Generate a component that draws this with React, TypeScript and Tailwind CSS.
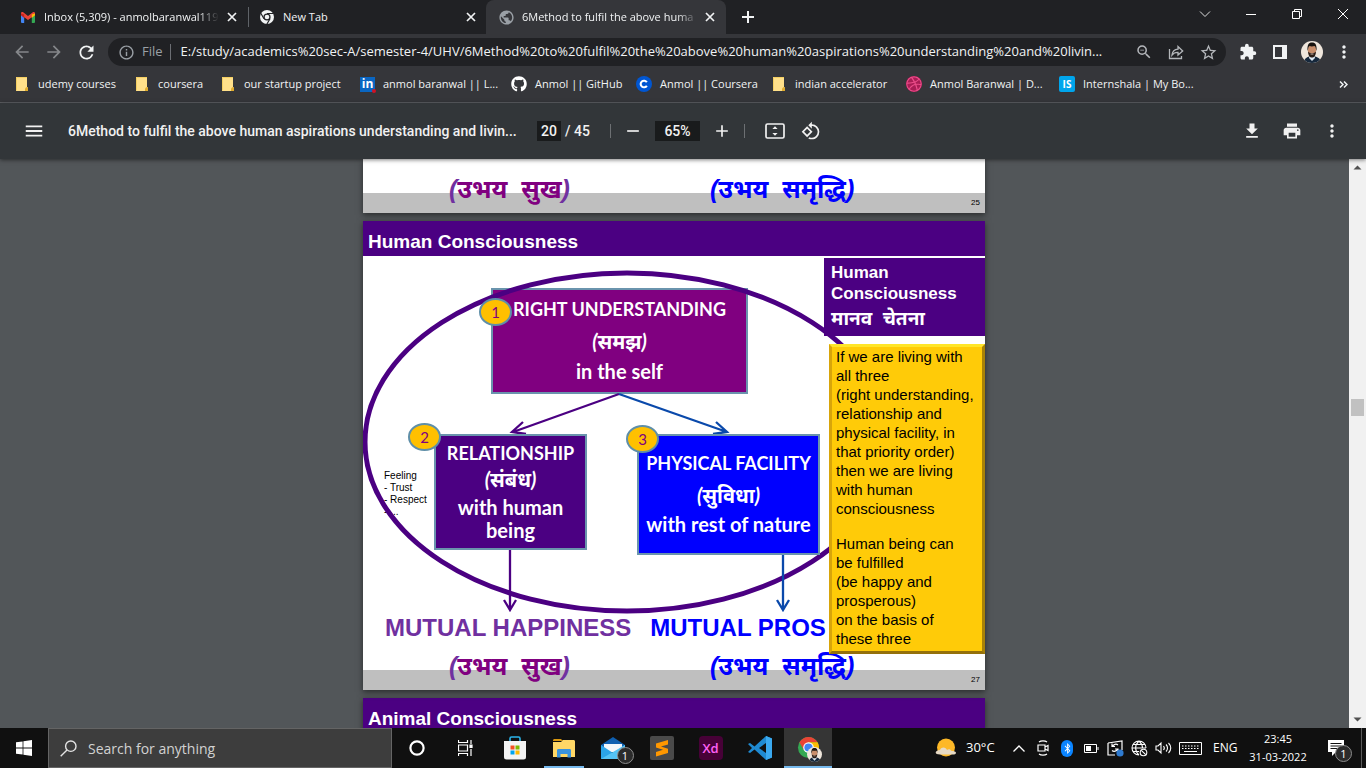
import type { ReactNode } from "react";
import {
  MdAdd,
  MdArrowBack,
  MdArrowForward,
  MdDownload,
  MdExtension,
  MdInfoOutline,
  MdMenu,
  MdMoreVert,
  MdPrint,
  MdPublic,
  MdRefresh,
  MdRemove,
  MdRotate90DegreesCcw,
  MdStarBorder,
  MdZoomOut,
} from "react-icons/md";
import { FaBluetoothB, FaDribbble, FaGithub } from "react-icons/fa";

const UI = "font-['Open_Sans','Noto_Sans',sans-serif]";

function IconButton({ label, className = "", children }: { label: string; className?: string; children: ReactNode }) {
  return (
    <button type="button" aria-label={label} className={`flex shrink-0 items-center justify-center ${className}`}>
      {children}
    </button>
  );
}

function CloseIcon() {
  return (
    <svg viewBox="0 0 10 10" className="size-[10px]" stroke="#f1f3f4" strokeWidth="1.7">
      <path d="M1 1l8 8M9 1l-8 8" />
    </svg>
  );
}

function GmailIcon() {
  return (
    <svg viewBox="0 0 14 11" className="w-[14px]">
      <path d="M0 1.5V10a1 1 0 0 0 1 1h2.2V4z" fill="#4285f4" />
      <path d="M14 1.5V10a1 1 0 0 1-1 1h-2.2V4z" fill="#34a853" />
      <path d="M0 1.500C0 .2 1.500-.3 2.500.5L7 4l4.500-3.500C12.500-.3 14 .2 14 1.500L13.900 3 7 8 .1 3z" fill="#ea4335" />
      <path d="M0 1.500l3.200 1V6L0 3.300z" fill="#c5221f" />
      <path d="M14 1.500l-3.200 1V6L14 3.300z" fill="#fbbc04" />
    </svg>
  );
}

function ChromeMonoIcon() {
  return (
    <svg viewBox="0 0 16 16" className="size-[16px]">
      <circle cx="8" cy="8" r="7" fill="#f1f3f4" />
      <path d="M8 4.500h6.500M5 9.700L1.800 4.200M11 9.800L7.800 15.200" stroke="#202124" strokeWidth="1.200" />
      <circle cx="8" cy="8" r="3.600" fill="#202124" />
      <circle cx="8" cy="8" r="2.300" fill="#f1f3f4" />
    </svg>
  );
}

function Avatar({ className }: { className: string }) {
  return (
    <svg viewBox="0 0 22 22" className={className}>
      <defs>
        <clipPath id="face">
          <circle cx="11" cy="11" r="11" />
        </clipPath>
      </defs>
      <g clipPath="url(#face)">
        <rect width="22" height="22" fill="#efe6dc" />
        <path d="M3 22c0-5 4-7 8-7s9 2 9 7z" fill="#16283c" />
        <path d="M8.500 14h5l.5 3-3 3-3-3z" fill="#dfe9f2" />
        <ellipse cx="11" cy="9" rx="4.200" ry="5.500" fill="#c98e6b" />
        <path d="M6.500 10c-.5-6 1-8.500 4.500-8.500S16 4 15.500 10c-.8-3-1-4.500-2-5-2 .6-4 .4-5 0-1.200.8-1.300 3-2 5z" fill="#17130f" />
        <path d="M7 10.500c.4 5 2 6 4 6s3.600-1 4-6c-1 1.500-2 1.500-4 1.500s-3 0-4-1.500z" fill="#2a1c15" />
        <path d="M9.500 13h3" stroke="#e8cfc0" strokeWidth=".9" />
      </g>
    </svg>
  );
}

function TabStrip() {
  return (
    <header className="flex h-[34px] shrink-0 items-center bg-[#202124] text-[12px] text-[#f1f3f4]">
      <div className="flex w-[248px] shrink-0 items-center pl-[21px]">
        <GmailIcon />
        <span className="ml-[9px] w-[175px] overflow-hidden whitespace-nowrap text-[11px] [mask-image:linear-gradient(to_right,#000_88%,transparent)]">
          Inbox (5,309) - anmolbaranwal119
        </span>
        <IconButton label="Close Inbox" className="ml-[8px]"><CloseIcon /></IconButton>
      </div>
      <div className="h-[20px] w-px bg-[#5f6368]" />
      <div className="flex w-[237px] shrink-0 items-center pl-[10px]">
        <ChromeMonoIcon />
        <span className="ml-[8px] flex-1 text-[11px]">New Tab</span>
        <IconButton label="Close New Tab" className="mr-[10px]"><CloseIcon /></IconButton>
      </div>
      <div className="flex h-full w-[240px] shrink-0 items-center rounded-t-[8px] bg-[#35363a] pl-[12px]">
        <MdPublic className="size-[17px] text-[#9aa0a6]" />
        <span className="ml-[7px] w-[176px] overflow-hidden whitespace-nowrap text-[11px] [mask-image:linear-gradient(to_right,#000_88%,transparent)]">
          6Method to fulfil the above huma
        </span>
        <IconButton label="Close current tab" className="ml-[7px]"><CloseIcon /></IconButton>
      </div>
      <IconButton label="New tab" className="ml-[15px]">
        <svg viewBox="0 0 14 14" className="size-[14px]" stroke="#f1f3f4" strokeWidth="2"><path d="M7 1v12M1 7h12" /></svg>
      </IconButton>
      <div className="ml-auto flex h-[28px] items-center self-start">
        <IconButton label="Search tabs" className="w-[46px]">
          <svg viewBox="0 0 12 8" className="w-[12px]" fill="none" stroke="#dcdcdc"><path d="M1 1.500l5 5 5-5" /></svg>
        </IconButton>
        <IconButton label="Minimise" className="w-[46px]">
          <svg viewBox="0 0 10 10" className="w-[10px]" stroke="#fff"><path d="M0 5.500h10" /></svg>
        </IconButton>
        <IconButton label="Restore" className="w-[46px]">
          <svg viewBox="0 0 10 10" className="w-[10px]" fill="none" stroke="#fff"><path d="M.5 2.500h7v7h-7zM2.500 2.500v-2h7v7h-2" /></svg>
        </IconButton>
        <IconButton label="Close window" className="w-[46px]">
          <svg viewBox="0 0 10 10" className="w-[10px]" stroke="#fff"><path d="M0 0l10 10M10 0L0 10" /></svg>
        </IconButton>
      </div>
    </header>
  );
}

function AddressBar() {
  return (
    <div className="flex h-[36px] shrink-0 items-center bg-[#35363a] px-[6px]">
      <IconButton label="Back" className="w-[32px]"><MdArrowBack className="size-[20px] text-[#85878a]" /></IconButton>
      <IconButton label="Forward" className="w-[32px]"><MdArrowForward className="size-[20px] text-[#85878a]" /></IconButton>
      <IconButton label="Reload" className="w-[32px]"><MdRefresh className="size-[21px] text-[#f1f3f4]" /></IconButton>
      <div className="ml-[6px] flex h-[28px] min-w-0 flex-1 items-center rounded-full bg-[#202124] pl-[10px]">
        <MdInfoOutline className="size-[17px] shrink-0 text-[#9aa0a6]" />
        <label htmlFor="url" className="ml-[7px] text-[13px] text-[#9aa0a6]">File</label>
        <span className="ml-[7px] h-[16px] w-px bg-[#6b6e73]" />
        <input
          id="url"
          className="ml-[10px] min-w-0 flex-1 bg-transparent text-[13px] text-[#f1f3f4] outline-none"
          defaultValue="E:/study/academics%20sec-A/semester-4/UHV/6Method%20to%20fulfil%20the%20above%20human%20aspirations%20understanding%20and%20livin..."
        />
        <IconButton label="Zoom out" className="w-[32px]"><MdZoomOut className="size-[18px] text-[#b4b7bb]" /></IconButton>
        <IconButton label="Share" className="w-[32px]">
          <svg viewBox="0 0 16 16" className="size-[16px]" fill="none" stroke="#b4b7bb" strokeWidth="1.300">
            <path d="M1.500 5v9.500h12V12M4 11c.5-4 3-5.600 6-5.800V2.500L14.700 7 10 11V8.300C7.500 8.200 5.500 9 4 11z" />
          </svg>
        </IconButton>
        <IconButton label="Bookmark" className="mr-[2px] w-[32px]"><MdStarBorder className="size-[19px] text-[#b4b7bb]" /></IconButton>
      </div>
      <IconButton label="Extensions" className="ml-[6px] w-[32px]"><MdExtension className="size-[18px] text-[#f1f3f4]" /></IconButton>
      <IconButton label="Side panel" className="w-[32px]">
        <svg viewBox="0 0 14 14" className="size-[14px]"><path d="M0 0h14v14H0zM2 2v10h7V2z" fill="#f1f3f4" fillRule="evenodd" /></svg>
      </IconButton>
      <IconButton label="Profile" className="w-[32px]"><Avatar className="size-[22px]" /></IconButton>
      <IconButton label="Menu" className="w-[32px]"><MdMoreVert className="size-[20px] text-[#f1f3f4]" /></IconButton>
    </div>
  );
}

function FolderIcon() {
  return (
    <svg viewBox="0 0 12 14" className="h-[14px] w-[12px]">
      <path d="M0 0h11v10l1 .8V14H0z" fill="#ffe08a" />
      <path d="M.5 13.500V.5H11" fill="none" stroke="#f4cf62" />
      <path d="M9 14v-2.500L10.500 10l1.500.8V14z" fill="#e0ac2f" />
    </svg>
  );
}

const bookmarks: { text: string; width: string; icon: ReactNode }[] = [
  { text: "udemy courses", width: "w-[120px] gap-[10px]", icon: <FolderIcon /> },
  { text: "coursera", width: "w-[86px] gap-[10px]", icon: <FolderIcon /> },
  { text: "our startup project", width: "w-[138px] gap-[10px]", icon: <FolderIcon /> },
  {
    text: "anmol baranwal || L...",
    width: "w-[151px] gap-[8px]",
    icon: (
      <span className="relative flex size-[15px] items-center justify-center bg-[#0a66c2] text-[12px] leading-none font-bold text-white">
        in
        <span className="absolute -right-px -bottom-px size-[4px] rounded-full bg-[#d11124]" />
      </span>
    ),
  },
  { text: "Anmol || GitHub", width: "w-[125px] gap-[8px]", icon: <FaGithub className="size-[16px] text-white" /> },
  {
    text: "Anmol || Coursera",
    width: "w-[137px] gap-[8px]",
    icon: (
      <svg viewBox="0 0 16 16" className="size-[16px]">
        <circle cx="8" cy="8" r="8" fill="#0056d2" />
        <path d="M10.800 6.300A3.300 3.300 0 1 0 10.800 9.700" fill="none" stroke="#fff" strokeWidth="2.100" />
      </svg>
    ),
  },
  { text: "indian accelerator", width: "w-[133px] gap-[10px]", icon: <FolderIcon /> },
  {
    text: "Anmol Baranwal | D...",
    width: "w-[153px] gap-[8px]",
    icon: <FaDribbble className="size-[16px] rounded-full bg-[#a81d55] text-[#ea4c89]" />,
  },
  {
    text: "Internshala | My Bo...",
    width: "w-[140px] gap-[8px]",
    icon: (
      <span className="flex size-[16px] items-center justify-center rounded-[2px] bg-[#00a5ec] text-[10px] leading-none font-bold text-white">
        IS
      </span>
    ),
  },
];

function BookmarksBar() {
  return (
    <nav aria-label="Bookmarks" className="flex h-[33px] shrink-0 items-start border-b border-[#5c5e62] bg-[#35363a] pl-[16px] text-[#f1f3f4]">
      {bookmarks.map((b) => (
        <a key={b.text} href="#" className={`flex h-[28px] shrink-0 items-center whitespace-nowrap text-[11px] ${b.width}`}>
          <span className="shrink-0">{b.icon}</span>
          {b.text}
        </a>
      ))}
      <button type="button" aria-label="More bookmarks" className="mr-[18px] ml-auto h-[28px]">
        <svg viewBox="0 0 9 7" className="w-[9px]" fill="none" stroke="#f1f3f4" strokeWidth="1.500"><path d="M1 .5l3 3-3 3M5 .5l3 3-3 3" /></svg>
      </button>
    </nav>
  );
}

function PdfToolbar() {
  return (
    <div className="relative z-10 flex h-[56px] shrink-0 items-center bg-[#323639] font-[Roboto,sans-serif] text-[14px] font-medium text-[#f1f1f1] shadow-[0_1px_4px_rgba(0,0,0,0.5)]">
      <IconButton label="Toggle sidebar" className="ml-[23px]"><MdMenu className="size-[22px]" /></IconButton>
      <h1 className="ml-[23px] w-[469px] shrink-0 whitespace-nowrap">
        6Method to fulfil the above human aspirations understanding and livin...
      </h1>
      <input aria-label="Page number" defaultValue="20" className="h-[20px] w-[24px] bg-[#191b1c] text-center outline-none" />
      <span className="ml-[4px] w-[45px]">/ 45</span>
      <span className="h-[14px] w-px bg-[#6d7073]" />
      <IconButton label="Zoom out" className="ml-[12px]"><MdRemove className="size-[20px]" /></IconButton>
      <input aria-label="Zoom level" defaultValue="65%" className="ml-[12px] h-[20px] w-[45px] bg-[#191b1c] text-center outline-none" />
      <IconButton label="Zoom in" className="ml-[12px]"><MdAdd className="size-[20px]" /></IconButton>
      <span className="ml-[12px] h-[14px] w-px bg-[#6d7073]" />
      <IconButton label="Fit to page" className="ml-[20px]">
        <svg viewBox="0 0 20 16" className="w-[20px]">
          <rect x="1" y="1" width="18" height="14" rx="1.500" fill="none" stroke="#f1f1f1" strokeWidth="1.700" />
          <path d="M10 3.300l2.600 2.700H7.400zM10 12.700l2.600-2.700H7.400z" fill="#f1f1f1" />
        </svg>
      </IconButton>
      <IconButton label="Rotate" className="ml-[16px]"><MdRotate90DegreesCcw className="size-[20px]" /></IconButton>
      <div className="mr-[24px] ml-auto flex items-center gap-[20px]">
        <IconButton label="Download"><MdDownload className="size-[20px]" /></IconButton>
        <IconButton label="Print"><MdPrint className="size-[20px]" /></IconButton>
        <IconButton label="More actions"><MdMoreVert className="size-[20px]" /></IconButton>
      </div>
    </div>
  );
}

function Outcomes({ page }: { page: number }) {
  return (
    <div className="flex h-[80px] shrink-0 flex-col font-bold whitespace-nowrap">
      <div className="flex gap-[19px] pl-[22px] text-[24px] leading-[36px]">
        <span className="text-[#7030a0]">MUTUAL HAPPINESS</span>
        <span className="text-[#0000ff]">MUTUAL PROS</span>
      </div>
      <div className="relative mt-auto flex h-[20px] items-end justify-end bg-[#bfbfbf] pr-[5px] text-[25px] leading-[34px]">
        <p className="absolute -top-[21px] left-[86px] text-[#800080] italic">
          <span className="text-[#7030a0]">(</span>उभय &nbsp;सुख<span className="text-[#7030a0]">)</span>
        </p>
        <p className="absolute -top-[21px] left-[347px] text-[#0000ff] italic">(उभय &nbsp;समृद्धि)</p>
        <span className="text-[8px] leading-[20px] font-normal text-black">{page}</span>
      </div>
    </div>
  );
}

function SlideTitle({ children }: { children: ReactNode }) {
  return (
    <h2 className="h-[35px] shrink-0 bg-[#4b0082] pt-[6px] pl-[5px] text-[19px] leading-[29px] font-bold text-white">
      {children}
    </h2>
  );
}

function Badge({ n, className }: { n: number; className: string }) {
  return (
    <span
      className={`absolute flex h-[28px] w-[33px] items-center justify-center rounded-[50%] border-2 border-[#5f8fa8] bg-[#ffc000] font-[Lato,sans-serif] text-[15px] leading-none text-[#800080] ${className}`}
    >
      {n}
    </span>
  );
}

function Box({ className, children }: { className: string; children: ReactNode }) {
  return (
    <div
      className={`absolute flex flex-col items-center border-2 border-[#6a94ad] text-center font-[Lato,'Noto_Sans',sans-serif] text-[20px] font-bold whitespace-nowrap text-white ${className}`}
    >
      {children}
    </div>
  );
}

function HumanConsciousnessSlide() {
  return (
    <section className="relative flex h-[469px] w-[622px] shrink-0 flex-col overflow-hidden bg-white shadow-[0_2px_6px_rgba(0,0,0,0.5)]">
      <SlideTitle>Human Consciousness</SlideTitle>
      <div className="flex-1" />
      <Outcomes page={27} />

      <Box className="top-[67px] left-[128px] h-[106px] w-[257px] bg-[#800080] pt-[7px]">
        <span className="text-[18px] leading-[24px]">RIGHT UNDERSTANDING</span>
        <span className="mt-[6px] leading-[28px] italic">(समझ)</span>
        <span className="mt-[4px] leading-[24px]">in the self</span>
      </Box>

      <p className="absolute top-[249px] left-[21px] text-[10px] leading-[12px] text-black">
        Feeling<br />- Trust<br />- Respect<br />- ...
      </p>

      <svg viewBox="0 0 622 469" className="absolute inset-0 size-full" fill="none">
        <ellipse cx="264" cy="221" rx="262" ry="169" stroke="#4b0082" strokeWidth="5" />
        <g stroke="#4b0082" strokeWidth="2.300">
          <path d="M256 173L150 211M160 201l-11 10 14 2M147 328v60M141 379l6 10 6-10" />
        </g>
        <g stroke="#0a49ab" strokeWidth="2.300">
          <path d="M256 173l108 38M353 201l11 10-14 2M420 333v55M414 379l6 10 6-10" />
        </g>
      </svg>

      <Box className="top-[213px] left-[71px] h-[116px] w-[153px] bg-[#4b0082] pt-[5px]">
        <span className="text-[18px] leading-[24px]">RELATIONSHIP</span>
        <span className="leading-[28px] italic">(संबंध)</span>
        <span className="mt-[3px] leading-[23px]">with human<br />being</span>
      </Box>
      <Box className="top-[213px] left-[274px] h-[121px] w-[183px] bg-[#0000ff] pt-[15px]">
        <span className="text-[18px] leading-[24px]">PHYSICAL FACILITY</span>
        <span className="mt-[6px] leading-[28px] italic">(सुविधा)</span>
        <span className="mt-[3px] leading-[24px]">with rest of nature</span>
      </Box>
      <Badge n={1} className="top-[77px] left-[116px]" />
      <Badge n={2} className="top-[202px] left-[45px]" />
      <Badge n={3} className="top-[204px] left-[263px]" />

      <div className="absolute top-[37px] left-[461px] h-[78px] w-[161px] bg-[#4b0082] pt-[4px] pl-[7px] text-[17px] leading-[21px] font-bold text-white">
        Human
        <br />
        Consciousness
        <p className="mt-[2px] text-[19px] leading-[26px] italic">मानव &nbsp;चेतना</p>
      </div>
      <div className="absolute top-[123px] left-[466px] h-[310px] w-[156px] border-[3px] border-t-[#ffe529] border-r-[#a88208] border-b-[#94700a] border-l-[#d8a50a] bg-[#ffcb08] pl-[4px] text-[15px] leading-[19px] whitespace-nowrap text-black">
        <p>
          If we are living with<br />all three<br />(right understanding,<br />relationship and<br />physical facility, in<br />that priority order)
          <br />then we are living<br />with human<br />consciousness
        </p>
        <p className="mt-[16px]">
          Human being can<br />be fulfilled<br />(be happy and<br />prosperous)<br />on the basis of<br />these three
        </p>
      </div>
    </section>
  );
}

function Viewer() {
  return (
    <main className="flex min-h-0 flex-1 bg-[#525659]">
      <div className="flex min-w-0 flex-1 flex-col items-center gap-[8px] overflow-hidden pr-px font-['Liberation_Sans','Noto_Sans',sans-serif]">
        <section className="flex h-[54px] w-[622px] shrink-0 flex-col justify-end overflow-hidden bg-white shadow-[0_2px_6px_rgba(0,0,0,0.5)]">
          <Outcomes page={25} />
        </section>
        <HumanConsciousnessSlide />
        <section className="w-[622px] shrink-0 shadow-[0_2px_6px_rgba(0,0,0,0.5)]">
          <SlideTitle>Animal Consciousness</SlideTitle>
        </section>
      </div>
      <div className="flex w-[17px] shrink-0 flex-col items-center bg-[#f1f1f1]">
        <svg viewBox="0 0 17 17" className="size-[17px]"><path d="M8.500 6.500l4 4h-8z" fill="#505050" /></svg>
        <div className="mt-[223px] h-[17px] w-[13px] bg-[#c1c1c1]" />
        <svg viewBox="0 0 17 17" className="mt-auto size-[17px]"><path d="M8.500 10.500l4-4h-8z" fill="#505050" /></svg>
      </div>
    </main>
  );
}

function TaskButton({ label, active = "", children }: { label: string; active?: string; children: ReactNode }) {
  return (
    <IconButton label={label} className={`h-full w-[49px] ${active}`}>
      {children}
    </IconButton>
  );
}

function CountBadge({ className }: { className: string }) {
  return (
    <span className={`absolute flex size-[17px] items-center justify-center rounded-full border border-[#8d8d8d] bg-[#2b2b2b] text-[11px] leading-none text-white ${className}`}>
      1
    </span>
  );
}

function Taskbar() {
  return (
    <footer className="flex h-[40px] shrink-0 items-center bg-[#101010] text-white">
      <IconButton label="Start" className="h-full w-[48px]">
        <svg viewBox="0 0 16 16" className="size-[16px]" fill="#fff">
          <path d="M0 2.300l6.600-.9v6.200H0zM7.400 1.300L16 0v7.600H7.400zM0 8.400h6.600v6.200L0 13.700zM7.400 8.400H16V16l-8.600-1.200z" />
        </svg>
      </IconButton>
      <div className="flex h-full w-[344px] shrink-0 items-center border border-[#646464] bg-[#3d3d3d] pl-[11px]">
        <svg viewBox="0 0 17 17" className="size-[17px] shrink-0" fill="none" stroke="#e4e4e4" strokeWidth="1.400">
          <circle cx="10.800" cy="6.200" r="5.200" />
          <path d="M7 10l-6.300 6.300" />
        </svg>
        <input aria-label="Search" placeholder="Search for anything" className="ml-[11px] min-w-0 flex-1 bg-transparent text-[14px] outline-none placeholder:text-[#d2d2d2]" />
      </div>
      <TaskButton label="Cortana">
        <svg viewBox="0 0 16 16" className="size-[16px]" fill="none" stroke="#fff" strokeWidth="2.200"><circle cx="8" cy="8" r="6.600" /></svg>
      </TaskButton>
      <TaskButton label="Task view">
        <svg viewBox="0 0 16 16" className="size-[16px]" fill="none" stroke="#fff" strokeWidth="1.200">
          <path d="M.5 0v2.500h9V0M.5 16v-2.500h9V16M.5 5h9v6h-9zM13 0v4M13 9v7" />
          <path d="M12 5h2v2.500h-2z" fill="#fff" />
        </svg>
      </TaskButton>
      <TaskButton label="Microsoft Store">
        <svg viewBox="0 0 24 24" className="size-[24px]">
          <path d="M7 6V2.500C7 1.500 7.500 1 8.500 1h7c1 0 1.500.5 1.500 1.500V6" fill="none" stroke="#2bb4ea" strokeWidth="1.600" />
          <path d="M1 5h22v16a2.500 2.500 0 0 1-2.500 2.500h-17A2.500 2.500 0 0 1 1 21z" fill="#f3f3f3" />
          <path d="M7.500 9.500h4v4h-4z" fill="#f25022" />
          <path d="M12.500 9.500h4v4h-4z" fill="#7fba00" />
          <path d="M7.500 14.500h4v4h-4z" fill="#00a4ef" />
          <path d="M12.500 14.500h4v4h-4z" fill="#ffb900" />
        </svg>
      </TaskButton>
      <TaskButton label="File Explorer" active="bg-[linear-gradient(#76b9ed,#76b9ed)] bg-[length:40px_2px] bg-[position:center_bottom] bg-no-repeat">
        <svg viewBox="0 0 22 19" className="w-[22px]">
          <path d="M0 1.500C0 .6.600 0 1.500 0H8l2 2H0z" fill="#d9980f" />
          <path d="M0 3h8l2-2h10.500c.9 0 1.500.6 1.500 1.500V18H0z" fill="#ffd766" />
          <path d="M4 18.500V11.500c0-1 .5-1.500 1.500-1.500h11c1 0 1.500.5 1.500 1.500v7h-3.500V15h-7v3.500z" fill="#3a93dd" />
        </svg>
      </TaskButton>
      <TaskButton label="Mail">
        <span className="relative block">
          <svg viewBox="0 0 24 22" className="w-[24px]">
            <path d="M0 8L12 0l12 8v3H0z" fill="#0f5fb0" />
            <path d="M3 7h18v8H3z" fill="#f2f6fa" />
            <path d="M0 8l12 8 12-8v14H0z" fill="#2ba4e8" />
            <path d="M0 22L24 8v14z" fill="#55c3f5" />
          </svg>
          <CountBadge className="-right-[9px] -bottom-[5px]" />
        </span>
      </TaskButton>
      <TaskButton label="Sublime Text">
        <svg viewBox="0 0 24 24" className="size-[24px]">
          <rect width="24" height="24" rx="2" fill="#4a4a4a" />
          <path d="M18 4v4.400l-7 2.200 7 2.200v4.200L6 20.500V16l7-2.200-7-2.200V7.500z" fill="#ff9800" />
        </svg>
      </TaskButton>
      <TaskButton label="Adobe XD">
        <span className="flex size-[24px] items-center justify-center rounded-[4px] bg-[#470137] text-[13px] leading-none font-semibold text-[#ff61f6]">Xd</span>
      </TaskButton>
      <TaskButton label="Visual Studio Code">
        <svg viewBox="0 0 24 24" className="size-[24px]">
          <path d="M18 0L6.500 10.600 2 7 0 8l4 4-4 4 2 1 4.500-3.500L18 24l6-2.500v-19zM18 7v10l-7-5z" fill="#1f8ad2" fillRule="evenodd" />
          <path d="M18 0v24l6-2.500v-19z" fill="#3aa9f0" />
        </svg>
      </TaskButton>
      <IconButton label="Google Chrome" className="h-full w-[48px] border-b-2 border-[#76b9ed] bg-[#353535]">
        <span className="relative block">
          <svg viewBox="0 0 24 24" className="size-[23px]">
            <circle cx="12" cy="12" r="11" fill="#34a853" />
            <path d="M2.500 6.500A11 11 0 0 1 21.500 6.500H12L7.300 14.800z" fill="#ea4335" />
            <path d="M12 6.500h9.500A11 11 0 0 1 12 23l4.700-8.300z" fill="#fbbc04" />
            <circle cx="12" cy="12" r="5.500" fill="#fff" />
            <circle cx="12" cy="12" r="4.300" fill="#4285f4" />
          </svg>
          <Avatar className="absolute -right-[2px] -bottom-[3px] size-[15px]" />
        </span>
      </IconButton>

      <div className="ml-auto flex h-full items-center">
        <svg viewBox="0 0 22 20" className="w-[22px]">
          <circle cx="11" cy="9.500" r="9" fill="#fdb827" />
          <path d="M5 16.500c-6 0-5.500-4 0-4.500 1.500-3.500 6-3 7 0 1.500-1.500 4-.5 4 .8 6 0 7 3.700 1 3.700z" fill="#e6d9c4" />
        </svg>
        <span className="ml-[9px] w-[35px] text-[13px] whitespace-nowrap">30°C</span>
        <svg viewBox="0 0 12 7" className="ml-[12px] w-[12px]" fill="none" stroke="#fff" strokeWidth="1.300"><path d="M.5 6.500L6 1l5.500 5.500" /></svg>
        <svg viewBox="0 0 12 16" className="ml-[12px] w-[12px]" fill="none" stroke="#fff" strokeWidth="1.200">
          <path d="M1 5h7v6H1zM8 7l3-1.500v5L8 9M2 2c2-1.500 6-1.500 8 0M2 14c2 1.500 6 1.500 8 0" />
        </svg>
        <span className="ml-[12px] flex h-[17px] w-[12px] items-center justify-center rounded-[6px] bg-[#0a84ff]"><FaBluetoothB className="size-[11px]" /></span>
        <svg viewBox="0 0 15 9" className="ml-[11px] w-[15px]" fill="none" stroke="#fff"><path d="M.5.5h12v8H.5zM14 3v3" /><path d="M2 2h5v5H2z" fill="#fff" stroke="none" /></svg>
        <svg viewBox="0 0 17 17" className="ml-[8px] w-[17px]" fill="none" stroke="#fff" strokeWidth="1.200">
          <path d="M1 3l14-2v9M8 15H1V3M11 5a3.500 3.500 0 0 0-5.500 1.500M5 3.500v3h3M5 10.500a3.500 3.500 0 0 0 5.500-1.500M11 12V9H8" />
          <circle cx="13" cy="13" r="3.600" fill="#2f7bd0" stroke="none" />
        </svg>
        <svg viewBox="0 0 17 17" className="ml-[7px] w-[17px]" fill="none" stroke="#fff" strokeWidth="1.100">
          <path d="M8 15A7 7 0 1 1 15 8M8 15C3.500 11 3.500 5 8 1c2.600 2.300 3.500 4.500 3.500 7M1 8h14M2.500 4.500h11M2.500 11.500H8" />
          <circle cx="12.500" cy="12.500" r="3.300" /><path d="M10.300 10.300l4.400 4.400" />
        </svg>
        <svg viewBox="0 0 17 14" className="ml-[7px] w-[17px]" fill="none" stroke="#fff" strokeWidth="1.100">
          <path d="M1 5h2l3-3v10l-3-3H1zM8.500 5c1 1.200 1 2.800 0 4M11 3.500c2 2 2 5 0 7M13.500 2c3 3 3 7 0 10" />
        </svg>
        <svg viewBox="0 0 23 13" className="ml-[7px] w-[23px]" fill="none" stroke="#fff">
          <path d="M.5.500h22v12H.5z" /><path d="M3 4h17M3 6.500h17" strokeDasharray="1.500 1.500" /><path d="M5 9.500h13" />
        </svg>
        <span className="ml-[11px] w-[24px] text-[12px]">ENG</span>
        <div className="ml-[11px] w-[60px] text-center text-[11px] leading-[18px] whitespace-nowrap">
          <time className="block">23:45</time>
          <time className="block">31-03-2022</time>
        </div>
        <IconButton label="Notifications" className="ml-[14px] h-full w-[28px]">
          <span className="relative block">
            <svg viewBox="0 0 16 16" className="w-[16px]"><path d="M0 0h16v12H8l-4 4v-4H0z" fill="#fff" /><path d="M2.500 3.500h11M2.500 6h11M2.500 8.500h7" stroke="#101010" /></svg>
            <CountBadge className="-right-[8px] -bottom-[6px]" />
          </span>
        </IconButton>
        <div className="ml-[11px] h-full w-[5px] border-l border-[#5a5a5a]" />
      </div>
    </footer>
  );
}

export default function App() {
  return (
    <div className={`flex h-screen flex-col overflow-hidden ${UI}`}>
      <TabStrip />
      <AddressBar />
      <BookmarksBar />
      <PdfToolbar />
      <Viewer />
      <Taskbar />
    </div>
  );
}
